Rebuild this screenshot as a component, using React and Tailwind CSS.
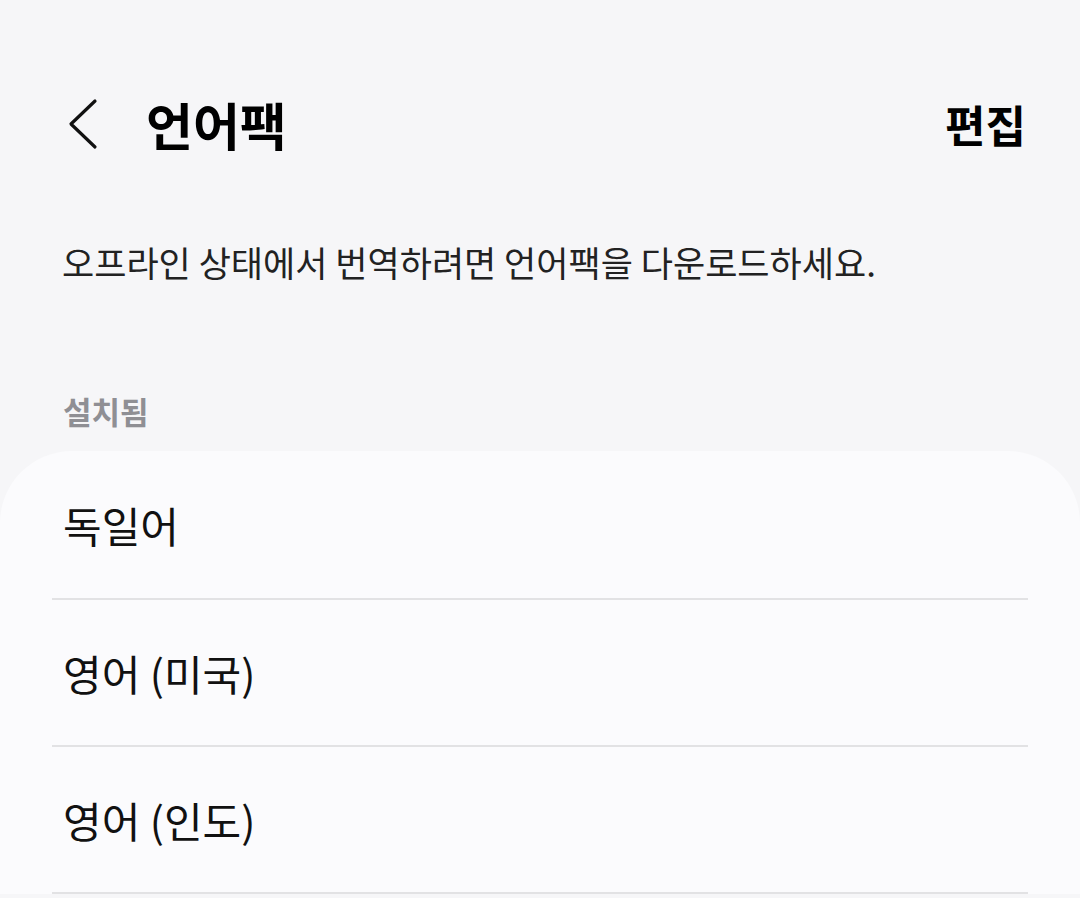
import React from "react";

const font = { fontFamily: '"Noto Sans CJK KR", "Noto Sans", sans-serif' };

function Row({ label, first }) {
  return (
    <>
      <div className={`${first ? "h-[147px]" : "h-[145px]"} flex items-center px-[63px] text-[42px] text-[#111111] leading-none`}>
        {label}
      </div>
      <div className="h-[2px] mx-[52px] bg-[#e2e2e4]" />
    </>
  );
}

export default function App() {
  return (
    <div className="w-[1080px] h-[898px] overflow-hidden bg-[#f6f6f8]" style={font}>
      <div className="pt-[72px]">
        <div className="h-[104px] flex items-center justify-between pl-[66px] pr-[54px]">
          <div className="flex items-center">
            <svg width="34" height="52" viewBox="0 0 34 52" className="mr-[46px]">
              <path d="M29 3 L5 26 L29 49" fill="none" stroke="#111" strokeWidth="3.2" strokeLinecap="round" strokeLinejoin="round" />
            </svg>
            <span className="text-[51px] font-bold text-black leading-none">언어팩</span>
          </div>
          <span className="text-[44px] font-bold text-black leading-none">편집</span>
        </div>
      </div>
      <div className="h-[170px] flex items-center px-[62px] text-[35px] text-[#222222] leading-none">
        오프라인 상태에서 번역하려면 언어팩을 다운로드하세요.
      </div>
      <div className="h-[105px] pt-[44px] px-[63px]">
        <div className="h-[40px] flex items-center text-[31px] font-bold text-[#8f8f94] leading-none">설치됨</div>
      </div>
      <div className="bg-[#fbfbfd] rounded-t-[72px]">
        <Row label="독일어" first />
        <Row label="영어 (미국)" />
        <Row label="영어 (인도)" />
      </div>
    </div>
  );
}
